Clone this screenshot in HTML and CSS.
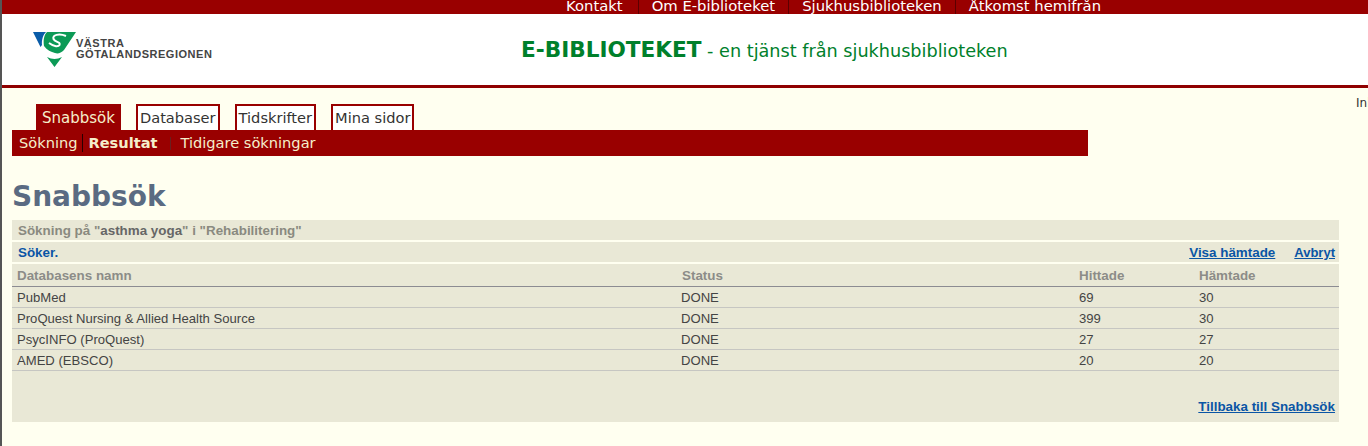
FILE: index.html
```html
<!DOCTYPE html>
<html lang="sv">
<head>
<meta charset="utf-8">
<title>E-biblioteket</title>
<link rel="stylesheet" href="styles.css">
</head>
<body>
<nav class="topbar">
  <a class="top-link first">Kontakt</a>
  <a class="top-link">Om E-biblioteket</a>
  <a class="top-link">Sjukhusbiblioteken</a>
  <a class="top-link">Åtkomst hemifrån</a>
</nav>
<header class="masthead">
  <div class="logo">
    <svg class="logo-mark" width="44" height="38" viewBox="0 0 44 38">
      <path d="M0 2H13C10 5 8.500 10 9 15L7.500 17Z" fill="#0a5ca8"/>
      <path d="M14 2H43L31 20C28 23 25 24 22 23C18 22 14 20 11 16C10 10 11 5 14 2Z" fill="#0c9a56"/>
      <path d="M33 6C26 3 19 5 20.500 9C22 12.500 28 11.500 26.500 15C25 17.500 20 16 16 13" fill="none" stroke="#fff" stroke-width="2"/>
      <path d="M14 27C19 29.500 24 29.500 29 27L21.500 37Z" fill="#0c9a56"/>
    </svg>
    <div class="logo-text"><span>VÄSTRA</span><span>GÖTALANDSREGIONEN</span></div>
  </div>
  <h1 class="site-title"><strong>E-BIBLIOTEKET</strong> - en tjänst från sjukhusbiblioteken</h1>
</header>
<div class="page">
  <main class="main">
    <div class="tabs">
      <a class="tab active">Snabbsök</a>
      <a class="tab">Databaser</a>
      <a class="tab">Tidskrifter</a>
      <a class="tab">Mina sidor</a>
    </div>
    <div class="subnav">
      <a class="sub-link sub-first">Sökning</a>
      <a class="sub-link sub-current">Resultat</a>
      <span class="sub-sep"></span>
      <a class="sub-link">Tidigare sökningar</a>
    </div>
    <h2 class="heading">Snabbsök</h2>
    <section class="panel">
      <div class="query">Sökning på "<b>asthma yoga</b>" i "Rehabilitering"</div>
      <div class="status-row">
        <span class="searching">Söker.</span>
        <span class="actions"><a class="link">Visa hämtade</a><a class="link link-short">Avbryt</a></span>
      </div>
      <table class="results">
        <thead>
          <tr><th class="c1">Databasens namn</th><th class="c2">Status</th><th class="c3">Hittade</th><th>Hämtade</th></tr>
        </thead>
        <tbody>
          <tr><td>PubMed</td><td>DONE</td><td>69</td><td>30</td></tr>
          <tr><td>ProQuest Nursing &amp; Allied Health Source</td><td>DONE</td><td>399</td><td>30</td></tr>
          <tr><td>PsycINFO (ProQuest)</td><td>DONE</td><td>27</td><td>27</td></tr>
          <tr><td>AMED (EBSCO)</td><td>DONE</td><td>20</td><td>20</td></tr>
        </tbody>
      </table>
      <div class="back"><a class="link">Tillbaka till Snabbsök</a></div>
    </section>
  </main>
  <aside class="side">Inloggad</aside>
</div>
</body>
</html>
```
FILE: styles.css
```css
html, body {
  margin: 0;
  height: 100%;
  overflow: hidden;
}
body {
  box-sizing: border-box;
  border-left: 2px solid #555;
  background: #fffff0;
  color: #333;
  font-family: "DejaVu Sans", Verdana, sans-serif;
}
.topbar {
  height: 14px;
  background: #990000;
  display: flex;
  padding-left: 551px;
  overflow: hidden;
}
.top-link {
  color: #fff;
  font-size: 14.800px;
  line-height: 12px;
  padding: 0 13px;
  border-left: 1px solid #5c0000;
  white-space: nowrap;
}
.top-link.first {
  border-left: 0;
  padding-right: 15px;
}
.masthead {
  height: 71px;
  background: #fff;
  border-bottom: 3px solid #8f0000;
  display: flex;
  align-items: flex-start;
}
.logo {
  display: flex;
  margin: 16px 0 0 31px;
  width: 180px;
  flex: none;
}
.logo-mark {
  display: block;
  flex: none;
}
.logo-text {
  display: flex;
  flex-direction: column;
  margin: 8px 0 0 -1px;
  font-family: "Liberation Sans", sans-serif;
  font-size: 11px;
  font-weight: bold;
  line-height: 11px;
  letter-spacing: 0.520px;
  color: #444;
}
.site-title {
  margin: 24px 0 0 308px;
  font-size: 17.650px;
  line-height: 24px;
  font-weight: normal;
  color: #00802b;
  white-space: nowrap;
}
.site-title strong {
  font-size: 21.600px;
  font-weight: bold;
}
.page {
  display: flex;
}
.main {
  width: 1327px;
  margin-left: 10px;
  flex: none;
}
.tabs {
  display: flex;
  gap: 15px;
  padding: 16px 0 0 24px;
  height: 26px;
}
.tab {
  box-sizing: border-box;
  height: 26px;
  padding: 2px 2px 0;
  border: 2px solid #990000;
  border-bottom: 0;
  background: #fff;
  color: #333;
  font-size: 14.600px;
  line-height: 20px;
  white-space: nowrap;
}
.tab.active {
  padding: 2px 4px 0;
  font-size: 15px;
  background: #990000;
  color: #f5eecb;
}
.subnav {
  width: 1076px;
  height: 26px;
  background: #990000;
  display: flex;
  align-items: center;
  color: #f5eecb;
  font-size: 14.600px;
  line-height: 18px;
  white-space: nowrap;
}
.sub-link {
  color: #f5eecb;
}
.sub-first {
  padding: 0 5px 0 7px;
  border-right: 1px solid #2a0000;
}
.sub-current {
  padding-left: 5px;
  font-weight: bold;
}
.sub-sep {
  width: 1px;
  height: 13px;
  margin: 0 9px 0 13px;
  background: #6a2020;
}
.heading {
  margin: 24px 0 0;
  font-size: 28px;
  line-height: 34px;
  font-weight: bold;
  color: #5a6b82;
}
.panel {
  margin-top: 6px;
  width: 1327px;
  height: 202px;
  background: #e9e8d6;
  font-family: "Liberation Sans", Arial, sans-serif;
  font-size: 13.100px;
}
.query {
  height: 20px;
  line-height: 21px;
  padding-left: 6px;
  font-size: 13.400px;
  font-weight: bold;
  color: #8a8a80;
  border-bottom: 2px solid #fffff0;
}
.query b {
  color: #666;
}
.status-row {
  height: 20px;
  display: flex;
  justify-content: space-between;
  line-height: 21px;
  padding: 0 4px 0 6px;
  font-size: 13.400px;
  font-weight: bold;
  border-bottom: 2px solid #fffff0;
}
.searching {
  color: #0a55a5;
}
.actions {
  display: flex;
  gap: 19px;
}
.link {
  color: #0a55a5;
  font-size: 13.400px;
  font-weight: bold;
  text-decoration: underline;
}
.link-short {
  font-size: 13px;
}
.results {
  width: 100%;
  border-collapse: collapse;
  table-layout: fixed;
}
.results th {
  height: 22px;
  padding: 1px 0 0 5px;
  box-sizing: border-box;
  text-align: left;
  font-size: 13.400px;
  font-weight: bold;
  color: #8c8c88;
  border-bottom: 1px solid #8c8c92;
}
.results th.c2 {
  padding-left: 6px;
}
.results td {
  height: 21px;
  box-sizing: border-box;
  padding: 1px 0 0 5px;
  color: #444;
  border-bottom: 1px solid #c6c6c2;
}
.c1 {
  width: 664px;
}
.c2 {
  width: 398px;
}
.c3 {
  width: 120px;
}
.back {
  margin-top: 28px;
  padding-right: 4px;
  text-align: right;
  line-height: 16px;
}
.side {
  margin: 8px 0 0 17px;
  font-size: 12px;
  line-height: 14px;
  color: #333;
  white-space: nowrap;
}
```
